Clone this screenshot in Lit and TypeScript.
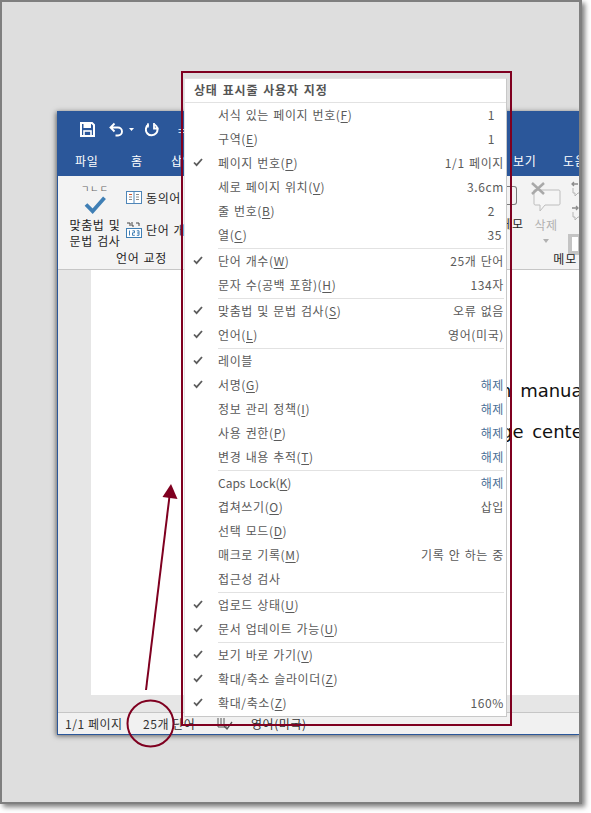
import { LitElement, html, css, svg } from "lit";
import { customElement } from "lit/decorators.js";

type Row = { label: string; key?: string; tail?: string; val?: string; pad?: number; on?: boolean; blue?: boolean; latin?: boolean };
const groups: Row[][] = [
  [
    { label: "서식 있는 페이지 번호(", key: "F", tail: ")", val: "1", pad: 9 },
    { label: "구역(", key: "E", tail: ")", val: "1", pad: 9 },
    { label: "페이지 번호(", key: "P", tail: ")", val: "1/1 페이지", on: true },
    { label: "세로 페이지 위치(", key: "V", tail: ")", val: "3.6cm" },
    { label: "줄 번호(", key: "B", tail: ")", val: "2", pad: 9 },
    { label: "열(", key: "C", tail: ")", val: "35", pad: 2 },
  ],
  [
    { label: "단어 개수(", key: "W", tail: ")", val: "25개 단어", on: true },
    { label: "문자 수(공백 포함)(", key: "H", tail: ")", val: "134자" },
  ],
  [
    { label: "맞춤법 및 문법 검사(", key: "S", tail: ")", val: "오류 없음", on: true },
    { label: "언어(", key: "L", tail: ")", val: "영어(미국)", on: true },
  ],
  [
    { label: "레이블", on: true },
    { label: "서명(", key: "G", tail: ")", val: "해제", on: true, blue: true },
    { label: "정보 관리 정책(", key: "I", tail: ")", val: "해제", blue: true },
    { label: "사용 권한(", key: "P", tail: ")", val: "해제", blue: true },
    { label: "변경 내용 추적(", key: "T", tail: ")", val: "해제", blue: true },
  ],
  [
    { label: "Caps Lock(", key: "K", tail: ")", val: "해제", blue: true, latin: true },
    { label: "겹쳐쓰기(", key: "O", tail: ")", val: "삽입" },
    { label: "선택 모드(", key: "D", tail: ")" },
    { label: "매크로 기록(", key: "M", tail: ")", val: "기록 안 하는 중" },
    { label: "접근성 검사" },
  ],
  [
    { label: "업로드 상태(", key: "U", tail: ")", on: true },
    { label: "문서 업데이트 가능(", key: "U", tail: ")", on: true },
  ],
  [
    { label: "보기 바로 가기(", key: "V", tail: ")", on: true },
    { label: "확대/축소 슬라이더(", key: "Z", tail: ")", on: true },
    { label: "확대/축소(", key: "Z", tail: ")", val: "160%", on: true },
  ],
];

const check = svg`<svg class="chk" viewBox="0 0 12 12" width="12" height="12"><path d="M2 6.500 L4.600 9.200 L10 3" fill="none" stroke="#5c5c5c" stroke-width="1.800"/></svg>`;

@customElement("app-root")
export class AppRoot extends LitElement {
  static styles = css`
    :host { display: block; width: 591px; height: 813px; background: #fff; font-family: "Noto Sans CJK KR", "Noto Sans", sans-serif; }
    .frame { position: relative; box-sizing: border-box; width: 582px; height: 804px; background: #dedede; border: 2px solid #7f7f7f; border-right-width: 3px; overflow: hidden; box-shadow: 3px 3px 5px rgba(0,0,0,.5); }
    .word { position: absolute; left: 55px; top: 109px; width: 524px; height: 624px; box-sizing: border-box; border-left: 1px solid #2b579a; border-bottom: 1px solid #2b579a; display: flex; flex-direction: column; box-shadow: -1px 1px 5px rgba(0,0,0,.55); background: #f1f1f1; }
    .title { height: 65px; flex: none; background: #2b579a; color: #fff; display: flex; flex-direction: column; }
    .qat { height: 33px; box-sizing: border-box; display: flex; align-items: center; padding: 3px 0 0 22px; }
    .qat .save { margin-right: 14px; }
    .qat .undo { margin-right: 11px; }
    .qat .dot { font-size: 12px; margin-left: 19px; }
    .tabs { display: flex; height: 32px; align-items: center; font-size: 12px; letter-spacing: .6px; padding-left: 17px; white-space: nowrap; }
    .tabs span { flex: none; }
    .tabs span:nth-child(1) { width: 56px; } .tabs span:nth-child(2) { width: 40px; } .tabs span:nth-child(3) { width: 342px; } .tabs span:nth-child(4) { width: 50px; }
    .ribbon { height: 94px; flex: none; background: #f3f3f3; border-bottom: 1px solid #c6c6c6; box-sizing: border-box; display: flex; font-size: 12px; color: #262626; position: relative; }
    .lang { width: 126px; box-sizing: border-box; flex: none; display: grid; grid-template-columns: 54px 1fr; grid-template-rows: 73px 1fr; padding-left: 10px; letter-spacing: .6px; word-spacing: 1px; }
    .spell { display: flex; flex-direction: column; align-items: center; line-height: 16px; white-space: nowrap; font-size: 12px; }
    .spell .abc { font-size: 9px; line-height: 10px; color: #666; margin-top: 8px; letter-spacing: 1px; }
    .spell svg { margin: 1px 0 3px; }
    .tools { display: flex; flex-direction: column; gap: 14px; padding: 12px 0 0 4px; white-space: nowrap; }
    .tool { display: flex; align-items: center; gap: 4px; height: 18px; }
    .gname { grid-column: 1 / 3; text-align: center; padding-left: 18px; white-space: nowrap; line-height: 18px; }
    .memo { margin-left: 321px; width: 25px; flex: none; display: flex; flex-direction: column; position: relative; }
    .box { width: 12px; height: 19px; border: 1px solid #7a7a7a; border-left: none; border-radius: 0 3px 3px 0; margin-top: 10px; box-sizing: border-box; }
    .mo { margin: 10px 0 0 -4px; line-height: 18px; white-space: nowrap; }
    .del { width: 32px; flex: none; display: flex; flex-direction: column; align-items: center; color: #b1b1b1; font-size: 12px; line-height: 16px; padding-top: 6px; letter-spacing: .5px; position: relative; white-space: nowrap; }
    .del svg { margin-bottom: 2px; }
    .del .tri { width: 0; height: 0; border: 3.500px solid transparent; border-top: 4px solid #b1b1b1; margin-top: 6px; }
    .memoName { position: absolute; right: 4px; bottom: 1px; line-height: 18px; letter-spacing: .8px; }
    .side { flex: 1; display: flex; flex-direction: column; padding: 5px 0 0 6px; gap: 8px; overflow: hidden; }
    .side svg { margin-left: 3px; flex: none; }
    .sel { width: 14px; height: 21px; box-sizing: border-box; border: 4px solid #c4c4c4; background: #fff; margin-top: 5px; border-top: 3px solid #c4c4c4; flex: none; }
    .sheet { flex: 1; min-height: 0; background: #e6e6e6; padding: 0 0 17px 33px; display: flex; }
    .page { flex: 1; background: #fff; padding: 100px 0 0 409px; font-family: "DejaVu Sans", sans-serif; font-size: 18px; word-spacing: 3px; line-height: 41px; color: #111; white-space: nowrap; overflow: hidden; min-width: 0; }
    .page .l2 { margin-left: 1px; }
    .status { height: 22px; box-sizing: border-box; flex: none; background: #f1f1f1; border-top: 1px solid #c6c6c6; display: flex; align-items: center; font-size: 12px; color: #333; padding-left: 7px; white-space: nowrap; letter-spacing: .55px; }
    .status span:nth-child(1) { width: 78px; } .status span:nth-child(2) { width: 74px; } .status svg { margin-right: 18px; }
    .menu { position: absolute; left: 182px; top: 76px; width: 323px; box-sizing: border-box; background: #fff; border: 1px solid #c8c8c8; border-left-color: #e4e4e4; border-top-color: #e4e4e4; font-size: 12px; color: #5a5a5a; padding-bottom: 1px; }
    .mhead { height: 23px; line-height: 21px; padding-left: 9px; font-weight: 700; border-bottom: 1px solid #e2e2e2; letter-spacing: .8px; word-spacing: 1.500px; font-size: 12px; color: #555; }
    .row { height: 24px; box-sizing: border-box; display: flex; align-items: center; padding: 0 2px 2px 33px; position: relative; white-space: nowrap; letter-spacing: .62px; word-spacing: 1px; }
    .row.latin .lab { letter-spacing: 0; }
    .row .lab { flex: 1; }
    .row u { text-underline-offset: 2px; }
    .chk { position: absolute; left: 7px; top: 5px; }
    .blue { color: #4b6f96; }
    .sep { height: 1px; margin: 1px 2px 0 33px; background: #e2e2e2; }
    .redbox { position: absolute; left: 178.500px; top: 69px; width: 331px; height: 654.500px; box-sizing: border-box; border: 2.500px solid #7f0020; pointer-events: none; }
    .ink { position: absolute; left: -2px; top: -2px; width: 591px; height: 813px; pointer-events: none; }
  `;

  private rowView(r: Row) {
    const style = r.pad ? `padding-right:${r.pad}px` : "";
    return html`<div class="row ${r.latin ? "latin" : ""}">
      ${r.on ? check : ""}
      <span class="lab">${r.label}${r.key ? html`<u>${r.key}</u>` : ""}${r.tail ?? ""}</span>
      ${r.val ? html`<span class=${r.blue ? "blue" : ""} style=${style}>${r.val}</span>` : ""}
    </div>`;
  }

  render() {
    return html`<div class="frame">
      <div class="word">
        <div class="title">
          <div class="qat">
            <svg class="save" width="15" height="15" viewBox="0 0 15 15"><path d="M1 1h11l2 2v11H1z" fill="none" stroke="#fff" stroke-width="2"/><rect x="3.500" y="1.500" width="7.500" height="4.500" fill="#fff"/><rect x="4" y="9" width="7" height="5" fill="none" stroke="#fff" stroke-width="1.600"/></svg>
            <svg class="undo" width="25" height="15" viewBox="0 0 25 15"><path d="M1.500 5.500h7.500a4 4 0 0 1 0 8H6.500M5.500 1.500l-4 4 4 4" fill="none" stroke="#fff" stroke-width="1.900"/><path d="M20 6h5l-2.500 3z" fill="#fff"/></svg>
            <svg width="14" height="15" viewBox="0 0 14 15"><path d="M9.500 2.500a5.800 5.800 0 1 1-6 .2" fill="none" stroke="#fff" stroke-width="2"/><path d="M3 1.200v4.300" fill="none" stroke="#fff" stroke-width="1.600"/><path d="M9 1v5.500h4.500" fill="none" stroke="#fff" stroke-width="1.800"/></svg>
            <span class="dot">=</span>
          </div>
          <div class="tabs"><span>파일</span><span>홈</span><span>삽입</span><span>보기</span><span>도움말</span></div>
        </div>
        <div class="ribbon">
          <div class="lang">
            <div class="spell">
              <span class="abc">ㄱㄴㄷ</span>
              <svg width="24" height="20" viewBox="0 0 24 20"><path d="M2.500 10 L9.500 17 L22 3" fill="none" stroke="#3f7fb5" stroke-width="4"/></svg>
              <span>맞춤법 및</span><span>문법 검사</span>
            </div>
            <div class="tools">
              <div class="tool"><svg width="16" height="13" viewBox="0 0 16 13"><rect x=".5" y=".5" width="15" height="12" fill="#fff" stroke="#4f86b8"/><path d="M8 1v11" stroke="#4f86b8"/><path d="M3 3.500h3" stroke="#d4552a"/><path d="M3 6h3M3 8.500h3M10 3.500h3M10 6h3M10 8.500h3" stroke="#8a8a8a"/></svg><span>동의어</span></div>
              <div class="tool"><svg width="16" height="17" viewBox="0 0 16 17"><rect x=".5" y="7.500" width="15" height="9" fill="#fff" stroke="#3f7fb5"/><path d="M1 2h3v3M6 1v4h2M10 2h3v3" stroke="#444" fill="none"/><path d="M3.500 9.500v5M6.500 9.800h2v2h-2v2.500h2.300M10.800 9.800h2.200v4.500h-2.200M11 12h2" stroke="#3f7fb5" fill="none"/></svg><span>단어 개수</span></div>
            </div>
            <div class="gname">언어 교정</div>
          </div>
          <div class="memo"><div class="box"></div><div class="mo">메모</div></div>
          <div class="del">
            <svg width="30" height="33" viewBox="0 0 30 33"><path d="M3 8h25a1.500 1.500 0 0 1 1 1v13a1.500 1.500 0 0 1-1 1H14l-5 6v-6H4a1.500 1.500 0 0 1-1-1z" fill="#f5f5f5" stroke="#bdbdbd"/><path d="M1 1l12 11M13 1L1 12" stroke="#a9a9a9" stroke-width="2.500"/></svg>
            <span>삭제</span><span class="tri"></span>
          </div>
          <div class="side">
            <svg width="12" height="16" viewBox="0 0 12 16"><path d="M2 7v5h2v3l3-3h5V4H8" fill="none" stroke="#b5b5b5"/><path d="M7 3H1M3 1L1 3l2 2" fill="none" stroke="#8c8c8c" stroke-width="1.300"/></svg>
            <svg width="12" height="16" viewBox="0 0 12 16"><path d="M2 7v5h2v3l3-3h5V4H8" fill="none" stroke="#b5b5b5"/><path d="M1 3h6M5 1l2 2-2 2" fill="none" stroke="#8c8c8c" stroke-width="1.300"/></svg>
            <div class="sel"></div>
          </div>
          <div class="memoName">메모</div>
        </div>
        <div class="sheet"><div class="page"><div>n manual</div><div class="l2">ge center</div></div></div>
        <div class="status">
          <span>1/1 페이지</span><span>25개 단어</span>
          <svg width="16" height="14" viewBox="0 0 16 14"><path d="M1 1v9h9M4 1v6M7 1v6" fill="none" stroke="#555"/><path d="M7 9l3 3 5-7" fill="none" stroke="#555" stroke-width="1.300"/></svg>
          <span>영어(미국)</span>
        </div>
      </div>

      <div class="menu">
        <div class="mhead">상태 표시줄 사용자 지정</div>
        ${groups.map((g, i) => html`${i ? html`<div class="sep"></div>` : ""}${g.map((r) => this.rowView(r))}`)}
      </div>

      <div class="redbox"></div>
      <svg class="ink" viewBox="0 0 591 813">
        <circle cx="150.500" cy="723.500" r="23" fill="none" stroke="#7f0020" stroke-width="2"/>
        <path d="M146 690 L169.400 497" stroke="#7f0020" stroke-width="2" fill="none"/>
        <path d="M171 484 L177.500 499 L162.500 497 Z" fill="#7f0020"/>
      </svg>
    </div>`;
  }
}
